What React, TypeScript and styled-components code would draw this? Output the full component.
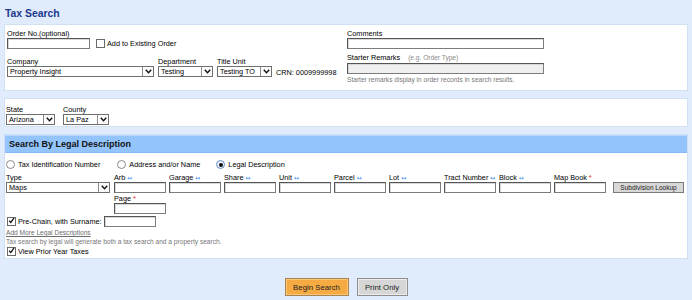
import React from 'react';
import styled, { createGlobalStyle } from 'styled-components';

const GlobalStyle = createGlobalStyle`
  html, body {
    margin: 0;
    padding: 0;
    background: #e0ebfc;
  }
  body {
    font-family: 'Liberation Sans', Arial, sans-serif;
    font-size: 7.3px;
    color: #000;
  }
  * {
    box-sizing: border-box;
  }
`;

const Page = styled.div`
  width: 692px;
  height: 300px;
  padding: 0 4px 0 4px;
  overflow: hidden;
`;

const Title = styled.h1`
  margin: 0;
  height: 24px;
  padding: 7px 0 0 1px;
  font-size: 10.4px;
  line-height: 13px;
  font-weight: bold;
  color: #1b3a8c;
`;

const Panel = styled.div`
  background: #fff;
  border: 1px solid #d2e0f6;
  margin-bottom: 7px;
`;

const TopPanel = styled(Panel)`
  display: flex;
  height: 67px;
  padding: 4px 0 0 2px;
`;

const Column = styled.div<{ width?: number }>`
  display: flex;
  flex-direction: column;
  width: ${p => (p.width ? `${p.width}px` : 'auto')};
`;

const Label = styled.div`
  height: 9px;
  line-height: 9px;
  white-space: nowrap;
`;

const Hint = styled.span`
  color: #8a8a8a;
  font-size: 6.6px;
  margin-left: 8px;
`;

const Note = styled.div<{ top?: number }>`
  color: #777;
  font-size: 6.6px;
  line-height: 8px;
  height: 8px;
  margin-top: ${p => p.top ?? 0}px;
  white-space: nowrap;
`;

const TextInput = styled.div<{ width: number; disabled?: boolean }>`
  width: ${p => p.width}px;
  height: 11px;
  flex: none;
  border: 1px solid #7c7c7c;
  border-top-color: #555;
  border-left-color: #555;
  background: ${p => (p.disabled ? '#efefef' : '#fff')};
  box-shadow: inset 1px 1px 0 #d8d8d8;
`;

const Row = styled.div<{ gap?: number; top?: number; align?: string }>`
  display: flex;
  align-items: ${p => p.align ?? 'center'};
  gap: ${p => p.gap ?? 0}px;
  margin-top: ${p => p.top ?? 0}px;
`;

const SelectFrame = styled.div<{ width: number }>`
  width: ${p => p.width}px;
  height: 11px;
  flex: none;
  display: flex;
  align-items: stretch;
  border: 1px solid #6f6f6f;
  background: #fff;
`;

const SelectValue = styled.span`
  flex: 1;
  padding-left: 2px;
  line-height: 9px;
  white-space: nowrap;
  overflow: hidden;
`;

const ArrowBox = styled.span`
  width: 11px;
  margin: 0 0 0 1px;
  border-left: 1px solid #8c8c8c;
  display: flex;
  align-items: center;
  justify-content: center;
  background: #fafafa;
`;

const CheckBox = styled.span`
  width: 9px;
  height: 9px;
  flex: none;
  border: 1px solid #6a6a6a;
  background: #fff;
  display: flex;
  align-items: center;
  justify-content: center;
`;

const RadioCircle = styled.span<{ checked?: boolean }>`
  width: 9px;
  height: 9px;
  flex: none;
  border-radius: 50%;
  border: 1px solid ${p => (p.checked ? '#6a8fc4' : '#8a8a8a')};
  background: ${p => (p.checked ? '#e6f0ff' : '#fff')};
  display: flex;
  align-items: center;
  justify-content: center;

  &::after {
    content: '';
    display: ${p => (p.checked ? 'block' : 'none')};
    width: 4px;
    height: 4px;
    border-radius: 50%;
    background: #111;
  }
`;

const CheckLabel = styled.span`
  white-space: nowrap;
  line-height: 9px;
`;

const PlainText = styled.span`
  white-space: nowrap;
  line-height: 9px;
`;

const Swap = styled.span`
  color: #3a8ef2;
  font-family: 'DejaVu Sans', sans-serif;
  font-size: 6px;
  margin-left: 2px;
`;

const Required = styled.span`
  color: #e02424;
  margin-left: 2px;
`;

const StatePanel = styled(Panel)`
  height: 29px;
  padding: 4px 0 0 1px;
  display: flex;
  gap: 8px;
`;

const SearchPanel = styled(Panel)`
  height: 125px;
  margin-bottom: 0;
`;

const SectionHeader = styled.div`
  height: 18px;
  background: #93c4fc;
  border-top: 1px solid #b5d6fd;
  border-bottom: 1px solid #86b9f8;
  padding-left: 4px;
  font-size: 9px;
  font-weight: bold;
  line-height: 16px;
  color: #111;
`;

const SearchBody = styled.div`
  padding: 0 0 0 1px;
`;

const RadioItem = styled.label`
  display: flex;
  align-items: center;
  gap: 3px;
  white-space: nowrap;
`;

const SmallButton = styled.button`
  height: 11px;
  width: 71px;
  padding: 0;
  margin-left: 7px;
  font-family: inherit;
  font-size: 6.5px;
  color: #222;
  background: #d8d8d8;
  border: 1px solid #7a7a7a;
  line-height: 9px;
`;

const LinkText = styled.a`
  color: #6c6c6c;
  font-size: 6.6px;
  line-height: 8px;
  height: 8px;
  display: block;
  margin-top: 2px;
  text-decoration: underline;
`;

const ButtonBar = styled.div`
  display: flex;
  justify-content: center;
  gap: 8px;
  margin-top: 19px;
`;

const ActionButton = styled.button<{ primary?: boolean }>`
  height: 18px;
  width: ${p => (p.primary ? 64 : 51)}px;
  padding: 0;
  font-family: inherit;
  font-size: 7.8px;
  color: #222;
  background: ${p => (p.primary ? '#f6aa42' : '#d6d6d6')};
  border: 1px solid ${p => (p.primary ? '#a98450' : '#8e8e8e')};
  box-shadow: inset 0 0 0 1px ${p => (p.primary ? '#f9c678' : '#ececec')};
`;

const Chevron = () => (
  <svg width="7" height="5" viewBox="0 0 7 5">
    <path d="M0.8 0.8 L3.5 3.8 L6.2 0.8" fill="none" stroke="#111" strokeWidth="1.4" />
  </svg>
);

const Tick = () => (
  <svg width="9" height="9" viewBox="0 0 9 9" style={{ marginTop: '-2px' }}>
    <path d="M1.5 4.8 L3.6 7 L7.8 1" fill="none" stroke="#111" strokeWidth="1.6" />
  </svg>
);

const Select = ({ width, value }: { width: number; value: string }) => (
  <SelectFrame width={width}>
    <SelectValue>{value}</SelectValue>
    <ArrowBox>
      <Chevron />
    </ArrowBox>
  </SelectFrame>
);

const Check = ({ label }: { label: string }) => (
  <Row gap={2}>
    <CheckBox>
      <Tick />
    </CheckBox>
    <CheckLabel>{label}</CheckLabel>
  </Row>
);

interface LegalField {
  label: string;
  swap?: boolean;
  required?: boolean;
}

const legalFields: LegalField[] = [
  { label: 'Arb', swap: true },
  { label: 'Garage', swap: true },
  { label: 'Share', swap: true },
  { label: 'Unit', swap: true },
  { label: 'Parcel', swap: true },
  { label: 'Lot', swap: true },
  { label: 'Tract Number', swap: true },
  { label: 'Block', swap: true },
  { label: 'Map Book', required: true },
];

const App: React.FC = () => {
  return (
    <Page>
      <GlobalStyle />
      <Title>Tax Search</Title>

      <TopPanel>
        <Column width={340}>
          <Label>Order No.(optional)</Label>
          <Row gap={6}>
            <TextInput width={83} />
            <Row gap={2}>
              <CheckBox />
              <CheckLabel>Add to Existing Order</CheckLabel>
            </Row>
          </Row>
          <Row gap={4} top={8} align="flex-end">
            <Column>
              <Label>Company</Label>
              <Select width={147} value="Property Insight" />
            </Column>
            <Column>
              <Label>Department</Label>
              <Select width={55} value="Testing" />
            </Column>
            <Column>
              <Label>Title Unit</Label>
              <Select width={55} value="Testing TO" />
            </Column>
            <PlainText>CRN: 0009999998</PlainText>
          </Row>
        </Column>
        <Column>
          <Label>Comments</Label>
          <TextInput width={197} />
          <Label style={{ marginTop: 4 }}>
            Starter Remarks<Hint>(e.g. Order Type)</Hint>
          </Label>
          <TextInput width={197} disabled style={{ marginTop: 1 }} />
          <Note top={2}>Starter remarks display in order records in search results.</Note>
        </Column>
      </TopPanel>

      <StatePanel>
        <Column>
          <Label style={{ marginTop: 2 }}>State</Label>
          <Select width={49} value="Arizona" />
        </Column>
        <Column>
          <Label style={{ marginTop: 2 }}>County</Label>
          <Select width={46} value="La Paz" />
        </Column>
      </StatePanel>

      <SearchPanel>
        <SectionHeader>Search By Legal Description</SectionHeader>
        <SearchBody>
          <Row top={7}>
            <RadioItem style={{ marginRight: 17 }}>
              <RadioCircle />
              Tax Identification Number
            </RadioItem>
            <RadioItem style={{ marginRight: 16 }}>
              <RadioCircle />
              Address and/or Name
            </RadioItem>
            <RadioItem>
              <RadioCircle checked />
              Legal Description
            </RadioItem>
          </Row>

          <Row top={4} align="flex-end">
            <Column style={{ marginRight: 4 }}>
              <Label>Type</Label>
              <Select width={104} value="Maps" />
            </Column>
            <Row gap={3} align="flex-end">
              {legalFields.map(f => (
                <Column key={f.label}>
                  <Label>
                    {f.label}
                    {f.swap && <Swap>↔</Swap>}
                    {f.required && <Required>*</Required>}
                  </Label>
                  <TextInput width={52} />
                </Column>
              ))}
            </Row>
            <SmallButton>Subdivision Lookup</SmallButton>
          </Row>

          <Column style={{ marginLeft: 108, marginTop: 1 }}>
            <Label>
              Page<Required>*</Required>
            </Label>
            <TextInput width={52} />
          </Column>

          <Row top={2} gap={2} style={{ paddingLeft: 1 }}>
            <Check label="Pre-Chain, with Surname:" />
            <TextInput width={52} />
          </Row>

          <LinkText>Add More Legal Descriptions</LinkText>
          <Note top={1}>Tax search by legal will generate both a tax search and a property search.</Note>

          <Row top={1} style={{ paddingLeft: 1 }}>
            <Check label="View Prior Year Taxes" />
          </Row>
        </SearchBody>
      </SearchPanel>

      <ButtonBar>
        <ActionButton primary>Begin Search</ActionButton>
        <ActionButton>Print Only</ActionButton>
      </ButtonBar>
    </Page>
  );
};

export default App;
